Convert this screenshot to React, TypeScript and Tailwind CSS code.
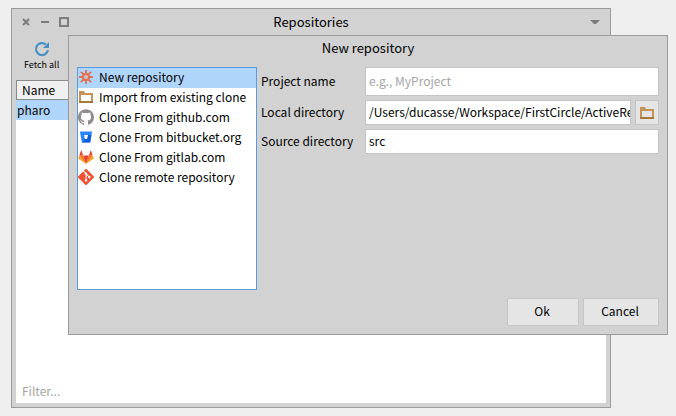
import type { ReactNode } from "react";
import { SiGit, SiGithub } from "react-icons/si";

function StarIcon() {
  return (
    <svg width="16" height="16" viewBox="0 0 16 16" aria-hidden="true">
      <path stroke="#e0714f" strokeWidth="1.8" d="M8 1v4M8 11v4M1 8h4M11 8h4M2.9 2.9l3 3M10.100 10.100l3 3M13.100 2.900l-3 3M5.900 10.100l-3 3" />
      <circle cx="8" cy="8" r="3" fill="none" stroke="#e0714f" strokeWidth="2.2" />
      <circle cx="8" cy="8" r="1.900" fill="#d3bcbc" />
    </svg>
  );
}

function FolderIcon() {
  return (
    <svg width="16" height="16" viewBox="0 0 16 16" aria-hidden="true">
      <path fill="#c4935a" fillRule="evenodd" d="M1 2h5l1 2h8v10H1zM3 6v6h10V6z" />
      <path fill="#a97836" d="M1 12h14v2H1z" />
    </svg>
  );
}

function BitbucketIcon() {
  return (
    <svg width="16" height="16" viewBox="0 0 16 16" aria-hidden="true">
      <path fill="#2684ff" d="M2.5 2.5h11q.6 0 .5.6l-1.7 10q-.1.5-.6.5H4.4q-.5 0-.6-.5L2 3.1q-.1-.6.5-.6zM6.1 6l.8 4.1h2.4l.8-4.1z" fillRule="evenodd" />
      <path fill="#0f5fdc" d="M13.4 6h-3.3l-.8 4.1H6.9l-2.8 3.3.3.2h7.3q.5 0 .6-.5z" />
    </svg>
  );
}

function GitlabIcon() {
  return (
    <svg width="16" height="16" viewBox="0 0 16 16" aria-hidden="true">
      <path fill="#e24329" d="M8 15L5.1 6.4h5.8zM3.3 1l1.8 5.4H1.3zM12.7 1l2 5.4h-3.8z" />
      <path fill="#fc6d26" d="M8 15L5.1 6.4H1.3zM8 15l2.9-8.6h3.8z" />
      <path fill="#fca326" d="M1.3 6.4L.3 9q-.1.5.2.8L8 15zM14.7 6.4l1 2.6q.1.5-.2.8L8 15z" />
    </svg>
  );
}

function RefreshIcon() {
  return (
    <svg width="16" height="16" viewBox="0 0 16 16" aria-hidden="true">
      <path fill="none" stroke="#4490c4" strokeWidth="2.2" d="M13.9 9.2A6 6 0 1 1 11.8 3.4" />
      <path fill="#4490c4" d="M15 1v6H9z" />
    </svg>
  );
}

const sources: { label: string; icon: ReactNode }[] = [
  { label: "New repository", icon: <StarIcon /> },
  { label: "Import from existing clone", icon: <FolderIcon /> },
  { label: "Clone From github.com", icon: <SiGithub size={16} color="#938c8c" /> },
  { label: "Clone From bitbucket.org", icon: <BitbucketIcon /> },
  { label: "Clone From gitlab.com", icon: <GitlabIcon /> },
  { label: "Clone remote repository", icon: <SiGit size={16} color="#f05033" /> },
];

const field = "h-full min-w-0 flex-1 border border-[#c4c4c4] bg-white pb-[3px] pl-[3px] outline-none placeholder:text-[#a5a5a5]";
const fieldLabel = "w-[104px] pb-0.5";
const button = "border border-[#c6c6c6] bg-[#e5e5e5]";

function RepositoriesWindow() {
  return (
    <section className="flex min-h-[400px] flex-col border border-[#9b9b9b] bg-[#d2d2d2] px-1 pb-1">
      <header className="flex h-[26px] items-center px-0.5">
        <div className="flex w-16 items-center gap-[3px] text-[#7c7c7c]">
          <button aria-label="Close" className="flex size-4 items-center justify-center">
            <svg width="8" height="8" viewBox="0 0 8 8"><path d="M1 1l6 6M7 1L1 7" stroke="currentColor" strokeWidth="2" /></svg>
          </button>
          <button aria-label="Minimize" className="flex size-4 items-center justify-center">
            <svg width="8" height="2" viewBox="0 0 8 2"><path d="M0 0h8v2H0z" fill="currentColor" /></svg>
          </button>
          <button aria-label="Maximize" className="flex size-4 items-center justify-center">
            <svg width="10" height="10" viewBox="0 0 10 10"><path d="M1 1h8v8H1z" fill="none" stroke="currentColor" strokeWidth="2" /></svg>
          </button>
        </div>
        <h1 className="flex-1 text-center text-[13px]">Repositories</h1>
        <div className="flex w-16 justify-end pr-1">
          <button aria-label="Window menu">
            <svg width="10" height="5" viewBox="0 0 10 5"><path d="M0 0h10L6 4H4z" fill="#7c7c7c" /></svg>
          </button>
        </div>
      </header>
      <div className="flex h-[45px] px-2 pt-1.5">
        <button className="flex flex-col items-center text-[9px] leading-4">
          <RefreshIcon />
          Fetch all
        </button>
      </div>
      <div className="flex flex-1 flex-col bg-white">
        <table className="w-full border-separate border-spacing-0">
          <thead>
            <tr>
              <th className="h-5 border border-[#8a8a8a] bg-[#f0f0f0] px-[5px] py-0 text-left font-normal leading-[18px]">Name</th>
            </tr>
          </thead>
          <tbody>
            <tr>
              <td className="h-5 bg-[#b0d5fa] p-0 px-px leading-5">pharo</td>
            </tr>
          </tbody>
        </table>
        <input aria-label="Filter" placeholder="Filter..." className="mt-auto h-6 px-1.5 pb-0.5 outline-none placeholder:text-[#a5a5a5]" />
      </div>
    </section>
  );
}

function NewRepositoryDialog() {
  return (
    <section role="dialog" aria-labelledby="dialog-title" className="absolute top-[35px] right-2 left-[68px] border border-[#9b9b9b] bg-[#d2d2d2] px-2 pb-2">
      <h2 id="dialog-title" className="h-[31px] text-center text-[13px] leading-6">New repository</h2>
      <div className="flex gap-1">
        <ul role="listbox" aria-label="Repository source" className="h-[223px] w-[180px] shrink-0 border border-[#5a9bdc] bg-white">
          {sources.map(({ label, icon }, index) => (
            <li key={label} role="option" aria-selected={index === 0} className="flex h-5 items-center gap-[5px] pb-0.5 leading-[18px] whitespace-nowrap aria-selected:bg-[#b0d5fa]">
              {icon}
              {label}
            </li>
          ))}
        </ul>
        <form className="flex min-w-0 flex-1 flex-col gap-1">
          <div className="flex h-[29px] items-center">
            <label htmlFor="project" className={fieldLabel}>Project name</label>
            <input id="project" placeholder="e.g., MyProject" className={field} />
          </div>
          <div className="flex h-[25px] items-center">
            <label htmlFor="local" className={fieldLabel}>Local directory</label>
            <input id="local" defaultValue="/Users/ducasse/Workspace/FirstCircle/ActiveRes" className={field} />
            <button type="button" aria-label="Choose directory" className={`ml-1 flex h-full w-6 items-center justify-center ${button}`}>
              <FolderIcon />
            </button>
          </div>
          <div className="flex h-[25px] items-center">
            <label htmlFor="source" className={fieldLabel}>Source directory</label>
            <input id="source" defaultValue="src" className={field} />
          </div>
        </form>
      </div>
      <footer className="mt-2 flex justify-end gap-1">
        <button className={`h-7 w-[72px] pr-0.5 pb-0.5 ${button}`}>Ok</button>
        <button className={`h-7 w-[76px] pr-0.5 pb-0.5 ${button}`}>Cancel</button>
      </footer>
    </section>
  );
}

export default function App() {
  return (
    <main className="relative min-h-screen bg-[#efefef] pt-2 pr-[65px] pl-[11px] font-['Noto_Sans_CJK_SC',sans-serif] text-xs leading-5 text-black">
      <RepositoriesWindow />
      <NewRepositoryDialog />
    </main>
  );
}
